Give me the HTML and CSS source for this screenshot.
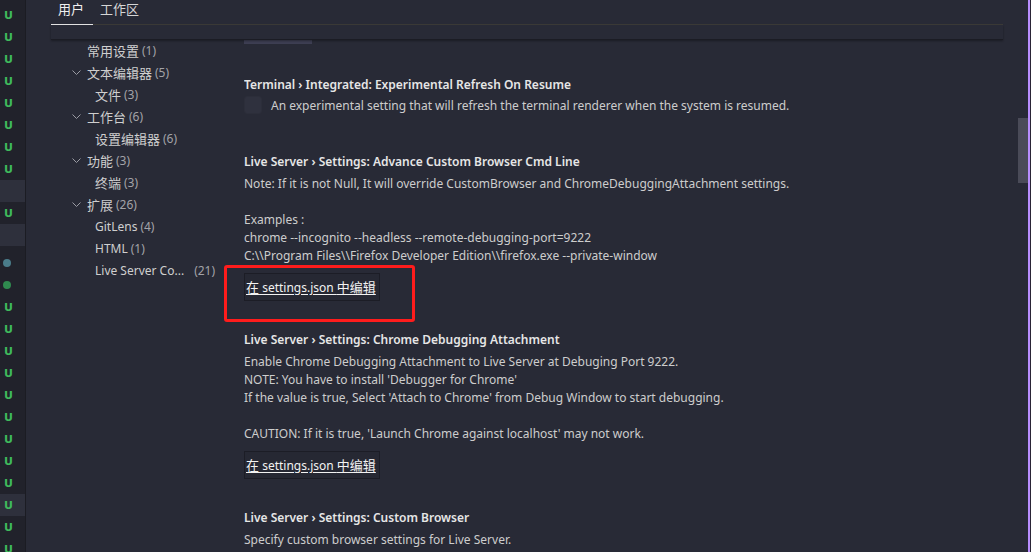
FILE: index.html
```html
<!DOCTYPE html>
<html lang="zh-CN">
<head>
<meta charset="utf-8">
<title>设置</title>
<link rel="stylesheet" href="styles.css">
</head>
<body>
<div class="window">
  <aside class="activity">
    <div class="act-group">
      <div class="act-row"><span class="u">U</span></div>
      <div class="act-row"><span class="u">U</span></div>
      <div class="act-row"><span class="u">U</span></div>
      <div class="act-row"><span class="u">U</span></div>
      <div class="act-row"><span class="u">U</span></div>
      <div class="act-row"><span class="u">U</span></div>
      <div class="act-row"><span class="u">U</span></div>
      <div class="act-row"><span class="u">U</span></div>
      <div class="act-row hl"></div>
      <div class="act-row"><span class="u">U</span></div>
      <div class="act-row hl"></div>
    </div>
    <div class="act-group second">
      <div class="act-row"><span class="dot blue"></span></div>
      <div class="act-row"><span class="dot green"></span></div>
      <div class="act-row"><span class="u">U</span></div>
      <div class="act-row"><span class="u">U</span></div>
      <div class="act-row"><span class="u">U</span></div>
      <div class="act-row"><span class="u">U</span></div>
      <div class="act-row"><span class="u">U</span></div>
      <div class="act-row"><span class="u">U</span></div>
      <div class="act-row"><span class="u">U</span></div>
      <div class="act-row"><span class="u">U</span></div>
      <div class="act-row"><span class="u">U</span></div>
      <div class="act-row hl"><span class="u">U</span></div>
      <div class="act-row"><span class="u">U</span></div>
      <div class="act-row"><span class="u">U</span></div>
    </div>
  </aside>

  <section class="editor">
    <div class="tabs">
      <span class="tab active">用户</span>
      <span class="tab">工作区</span>
    </div>
    <div class="subheader"></div>
    <div class="body">
      <nav class="tree">
        <div class="node l1"><span class="chev-space"></span><span class="label zh">常用设置</span><span class="count">(1)</span></div>
        <div class="node l1"><svg class="chev" viewBox="0 0 9 5" width="9" height="5"><path d="M0.5 0.5 L4.5 4.5 L8.5 0.5" fill="none" stroke="#9a9ba3" stroke-width="1"/></svg><span class="label zh">文本编辑器</span><span class="count">(5)</span></div>
        <div class="node l2"><span class="label zh">文件</span><span class="count">(3)</span></div>
        <div class="node l1"><svg class="chev" viewBox="0 0 9 5" width="9" height="5"><path d="M0.5 0.5 L4.5 4.5 L8.5 0.5" fill="none" stroke="#9a9ba3" stroke-width="1"/></svg><span class="label zh">工作台</span><span class="count">(6)</span></div>
        <div class="node l2"><span class="label zh">设置编辑器</span><span class="count">(6)</span></div>
        <div class="node l1"><svg class="chev" viewBox="0 0 9 5" width="9" height="5"><path d="M0.5 0.5 L4.5 4.5 L8.5 0.5" fill="none" stroke="#9a9ba3" stroke-width="1"/></svg><span class="label zh">功能</span><span class="count">(3)</span></div>
        <div class="node l2"><span class="label zh">终端</span><span class="count">(3)</span></div>
        <div class="node l1"><svg class="chev" viewBox="0 0 9 5" width="9" height="5"><path d="M0.5 0.5 L4.5 4.5 L8.5 0.5" fill="none" stroke="#9a9ba3" stroke-width="1"/></svg><span class="label zh">扩展</span><span class="count">(26)</span></div>
        <div class="node l2"><span class="label">GitLens</span><span class="count">(4)</span></div>
        <div class="node l2"><span class="label">HTML</span><span class="count">(1)</span></div>
        <div class="node l2"><span class="label">Live Server Co...</span><span class="count wide">(21)</span></div>
      </nav>

      <main class="content">
        <div class="btn-fragment"></div>

        <div class="setting first">
          <div class="title">Terminal › Integrated: Experimental Refresh On Resume</div>
          <div class="check-row"><span class="checkbox"></span><span class="desc-inline">An experimental setting that will refresh the terminal renderer when the system is resumed.</span></div>
        </div>

        <div class="setting">
          <div class="title">Live Server › Settings: Advance Custom Browser Cmd Line</div>
          <div class="desc">
            <p>Note: If it is not Null, It will override CustomBrowser and ChromeDebuggingAttachment settings.</p>
            <p class="blank"></p>
            <p>Examples :</p>
            <p>chrome --incognito --headless --remote-debugging-port=9222</p>
            <p>C:\\Program Files\\Firefox Developer Edition\\firefox.exe --private-window</p>
          </div>
          <a class="edit-btn"><span class="link"><span class="zh">在</span> settings.json <span class="zh">中编辑</span></span></a>
        </div>

        <div class="setting">
          <div class="title">Live Server › Settings: Chrome Debugging Attachment</div>
          <div class="desc">
            <p>Enable Chrome Debugging Attachment to Live Server at Debuging Port 9222.</p>
            <p>NOTE: You have to install 'Debugger for Chrome'</p>
            <p>If the value is true, Select 'Attach to Chrome' from Debug Window to start debugging.</p>
            <p class="blank"></p>
            <p>CAUTION: If it is true, 'Launch Chrome against localhost' may not work.</p>
          </div>
          <a class="edit-btn"><span class="link"><span class="zh">在</span> settings.json <span class="zh">中编辑</span></span></a>
        </div>

        <div class="setting">
          <div class="title">Live Server › Settings: Custom Browser</div>
          <div class="desc">
            <p>Specify custom browser settings for Live Server.</p>
          </div>
        </div>
      </main>
    </div>
    <div class="scroll-thumb"></div>
  </section>
  <div class="edge"></div>

  <div class="annotation"></div>
</div>
</body>
</html>
```

FILE: styles.css
```css
* { box-sizing: border-box; }
html, body { margin: 0; padding: 0; }
body {
  width: 1031px;
  height: 552px;
  overflow: hidden;
  background: #282a36;
  font-family: "Noto Sans", "Noto Sans CJK SC", sans-serif;
  font-size: 12px;
  color: #cccccc;
}
.zh {
  font-family: "Noto Sans CJK SC", sans-serif;
  font-size: 13px;
}
.window {
  position: relative;
  display: flex;
  width: 1031px;
  height: 552px;
  overflow: hidden;
}

/* activity / status strip */
.activity {
  width: 26px;
  flex: none;
  background: #21222b;
  border-right: 1px solid #1b1c23;
  padding-top: 4px;
}
.act-group.second { margin-top: 6px; }
.act-row {
  height: 22px;
  display: flex;
  align-items: center;
  justify-content: center;
  padding-right: 8px;
}
.act-row.hl { background: #2e303c; }
.u {
  font-family: "DejaVu Sans", sans-serif;
  font-weight: bold;
  font-size: 11px;
  color: #3fb95c;
  line-height: 1;
}
.dot {
  width: 8px;
  height: 8px;
  border-radius: 50%;
  margin-right: 3px;
}
.dot.blue { background: #4a7c8a; }
.dot.green { background: #2f8a4f; }

/* editor */
.editor {
  position: relative;
  flex: 1;
  display: flex;
  flex-direction: column;
  background: #282a36;
}
.tabs {
  display: flex;
  height: 25px;
  margin: 0 25px 0 25px;
  border-bottom: 1px solid #3c3b38;
}
.tab {
  display: block;
  padding: 0 7px;
  line-height: 17px;
  height: 25px;
  font-family: "Noto Sans CJK SC", sans-serif;
  font-size: 13px;
  color: #d6d6d6;
}
.tab.active {
  border-bottom: 1px solid #e8e8e8;
  margin-bottom: -1px;
  color: #f0f0f0;
  width: 42px;
}
.subheader {
  height: 15px;
  margin: 0 25px;
  border-bottom: 1px solid #1b1c24;
  box-shadow: 0 1px 2px rgba(0,0,0,0.35);
  position: relative;
  z-index: 1;
}
.body {
  display: flex;
  flex: 1;
  min-height: 0;
}

/* tree */
.tree {
  width: 218px;
  flex: none;
  padding-left: 46px;
  margin-top: -1px;
}
.node {
  height: 22px;
  display: flex;
  align-items: center;
  white-space: nowrap;
}
.node.l1 { padding-left: 0; }
.node.l2 { padding-left: 23px; }
.chev, .chev-space {
  width: 9px;
  flex: none;
  margin-right: 6px;
}
.label { color: #cfcfcf; }
.count { color: #a3a3a8; margin-left: 3px; }
.count.wide { margin-left: 10px; }

/* content */
.content {
  flex: 1;
  padding-right: 40px;
  overflow: hidden;
}
.btn-fragment {
  width: 68px;
  height: 4px;
  background: #3d3e52;
}
.setting { padding-top: 30px; }
.setting.first { padding-top: 32px; }
.title {
  font-weight: 600;
  color: #e6e6e6;
  line-height: 18px;
  height: 18px;
  white-space: nowrap;
}
.check-row {
  display: flex;
  align-items: center;
  height: 18px;
  margin-top: 2px;
  margin-bottom: 9px;
}
.checkbox {
  width: 18px;
  height: 18px;
  border-radius: 3px;
  background: #2f313e;
  border: 1px solid #2c2e3a;
  margin-right: 9px;
  flex: none;
}
.desc-inline, .desc p {
  color: #cdcdcd;
  white-space: nowrap;
}
.desc { margin-top: 4px; }
.desc p {
  margin: 0;
  line-height: 18px;
  height: 18px;
}
.edit-btn {
  display: flex;
  align-items: center;
  width: 136px;
  height: 28px;
  margin-top: 8px;
  padding-left: 1px;
  border: 1px solid #1c1d26;
  background: #262833;
  white-space: nowrap;
}
.link {
  color: #f2f2f2;
  text-decoration: underline;
  text-underline-offset: 2px;
  line-height: 18px;
}

.scroll-thumb {
  position: absolute;
  right: 0;
  top: 118px;
  width: 10px;
  height: 65px;
  background: #4a4b58;
}
.edge {
  width: 3px;
  flex: none;
  background: #b98eff;
  border-right: 1px solid #2a2436;
}
.annotation {
  position: absolute;
  left: 224px;
  top: 265px;
  width: 191px;
  height: 57px;
  border: 3px solid #ff1c1c;
  border-radius: 3px;
}
```
